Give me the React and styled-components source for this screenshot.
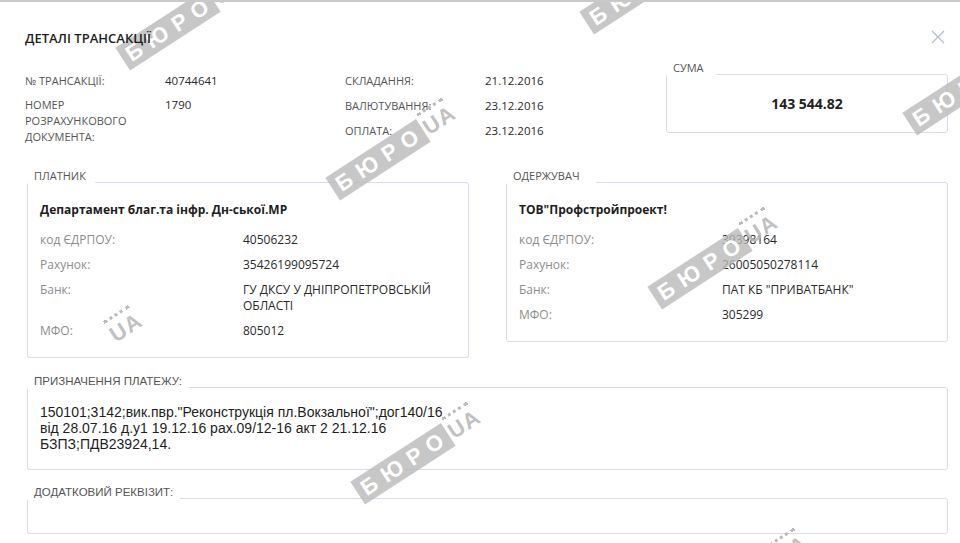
import React from 'react'
import styled, { createGlobalStyle } from 'styled-components'

const GlobalStyle = createGlobalStyle`
  html, body {
    margin: 0;
    padding: 0;
    background: #fff;
  }
  body {
    font-family: "Open Sans", "Noto Sans", sans-serif;
    overflow: hidden;
  }
`

const Modal = styled.div`
  position: relative;
  height: 543px;
  box-sizing: border-box;
  border-top: 2px solid #c9c9c9;
  padding: 27px 12px 0 25px;
  overflow: hidden;
  background: #fff;
`

const Header = styled.div`
  display: flex;
  align-items: center;
  justify-content: space-between;
`

const Title = styled.h1`
  position: relative;
  z-index: 2;
  margin: 0;
  font-size: 13px;
  line-height: 18px;
  font-weight: 600;
  color: #1e1e1e;
  text-transform: uppercase;
`

const Close = styled.button`
  border: 0;
  background: none;
  padding: 0;
  margin: -2px 3px 0 0;
  width: 14px;
  height: 14px;
  cursor: pointer;
  display: flex;
`

const TopSection = styled.div`
  display: grid;
  grid-template-columns: 320px 321px 282px;
  align-items: start;
  margin-top: 15px;
`

const InfoList = styled.dl`
  margin: 0;
  padding-top: 11px;
  display: grid;
  grid-template-columns: 140px 1fr;
  row-gap: ${p => p.$gap}px;
`

const InfoLabel = styled.dt`
  font-size: 11px;
  line-height: 16px;
  color: #555;
  text-transform: uppercase;
`

const InfoValue = styled.dd`
  margin: 0;
  font-size: 11.5px;
  line-height: 16px;
  color: #2a2a2a;
`

const Field = styled.fieldset`
  margin: 0;
  padding: 0;
  min-width: 0;
  border: 1px solid #d6ddef;
  border-radius: 3px;
`

const Legend = styled.legend`
  padding: 0 ${p => p.$gap}px 12px 6px;
  font-family: ${p => (p.$plain ? '"Liberation Sans", Arial, sans-serif' : '"Open Sans", sans-serif')};
  font-size: ${p => (p.$plain ? '11.5px' : '11px')};
  line-height: 12px;
  color: #555;
  text-transform: uppercase;
  background: #fff;
`

const SumValue = styled.div`
  padding: 9px 0 19px;
  text-align: center;
  font-size: 14px;
  line-height: 18px;
  font-weight: 700;
  color: #222;
`

const Parties = styled.div`
  display: grid;
  grid-template-columns: 442px 442px;
  column-gap: 37px;
  align-items: start;
  margin: 25px 0 0 2px;
`

const PartyBody = styled.div`
  padding: 8px 12px 18px 12px;
`

const PartyName = styled.div`
  font-size: 12px;
  line-height: 16px;
  font-weight: 700;
  color: #1e1e1e;
  margin-bottom: 14px;
`

const PartyRows = styled.dl`
  margin: 0;
  display: grid;
  grid-template-columns: 203px 1fr;
  row-gap: 9px;
`

const PartyLabel = styled.dt`
  font-size: 12px;
  line-height: 16px;
  color: #8d8d8d;
`

const PartyValue = styled.dd`
  margin: 0;
  font-size: 12px;
  line-height: 16px;
  color: #2a2a2a;
`

const WideField = styled(Field)`
  margin: ${p => p.$top}px 0 0 2px;
`

const Purpose = styled.div`
  padding: 5px 12px 17px;
  font-family: "Liberation Sans", Arial, sans-serif;
  font-size: 14px;
  line-height: 16px;
  color: #1e1e1e;
  white-space: pre-line;
`

const Empty = styled.div`
  min-height: 23px;
`

const Watermark = styled.div`
  position: absolute;
  z-index: 1;
  transform: translate(-50%, -50%) rotate(-33deg);
  display: flex;
  align-items: center;
  pointer-events: none;
  font-family: "Liberation Sans", Arial, sans-serif;
  font-weight: 700;
  font-size: 22px;
  line-height: 27px;
`

const Band = styled.span`
  background: rgba(185, 185, 185, 0.8);
  color: #fff;
  padding: 0 0 0 6px;
  letter-spacing: 8px;
`

const Tail = styled.span`
  position: relative;
  color: rgba(185, 185, 185, 0.9);
  letter-spacing: 1px;
  padding-left: 2px;
  &::before {
    content: '';
    position: absolute;
    left: 3px;
    right: 3px;
    top: -4px;
    border-top: 3px dotted rgba(175, 175, 175, 0.85);
  }
`

const marks = [
  { x: 183, y: 18 },
  { x: 647, y: -18 },
  { x: 970, y: 83 },
  { x: 393, y: 148 },
  { x: 125, y: 326, tailOnly: true },
  { x: 715, y: 257 },
  { x: 418, y: 452 },
  { x: 745, y: 578 },
]

const payer = {
  name: 'Департамент благ.та інфр. Дн-ської.МР',
  rows: [
    ['код ЄДРПОУ:', '40506232'],
    ['Рахунок:', '35426199095724'],
    ['Банк:', 'ГУ ДКСУ У ДНІПРОПЕТРОВСЬКІЙ ОБЛАСТІ'],
    ['МФО:', '805012'],
  ],
}

const payee = {
  name: 'ТОВ"Профстройпроект!',
  rows: [
    ['код ЄДРПОУ:', '39398164'],
    ['Рахунок:', '26005050278114'],
    ['Банк:', 'ПАТ КБ "ПРИВАТБАНК"'],
    ['МФО:', '305299'],
  ],
}

const Party = ({ title, gap, data }) => (
  <Field>
    <Legend $gap={gap}>{title}</Legend>
    <PartyBody>
      <PartyName>{data.name}</PartyName>
      <PartyRows>
        {data.rows.map(([l, v]) => (
          <React.Fragment key={l}>
            <PartyLabel>{l}</PartyLabel>
            <PartyValue>{v}</PartyValue>
          </React.Fragment>
        ))}
      </PartyRows>
    </PartyBody>
  </Field>
)

const App = () => {
  return (
    <Modal>
      <GlobalStyle />
      <Header>
        <Title>Деталі трансакції</Title>
        <Close aria-label="close">
          <svg width="14" height="14" viewBox="0 0 14 14">
            <path d="M1 1L13 13M13 1L1 13" stroke="#b4bccd" strokeWidth="1.3" fill="none" />
          </svg>
        </Close>
      </Header>

      <TopSection>
        <InfoList $gap={8}>
          <InfoLabel>№ трансакції:</InfoLabel>
          <InfoValue>40744641</InfoValue>
          <InfoLabel>Номер розрахункового документа:</InfoLabel>
          <InfoValue>1790</InfoValue>
        </InfoList>
        <InfoList $gap={9}>
          <InfoLabel>Складання:</InfoLabel>
          <InfoValue>21.12.2016</InfoValue>
          <InfoLabel>Валютування:</InfoLabel>
          <InfoValue>23.12.2016</InfoValue>
          <InfoLabel>Оплата:</InfoLabel>
          <InfoValue>23.12.2016</InfoValue>
        </InfoList>
        <Field>
          <Legend $gap={13}>Сума</Legend>
          <SumValue>143 544.82</SumValue>
        </Field>
      </TopSection>

      <Parties>
        <Party title="Платник" gap={9} data={payer} />
        <Party title="Одержувач" gap={16} data={payee} />
      </Parties>

      <WideField $top={17}>
        <Legend $gap={7} $plain>Призначення платежу:</Legend>
        <Purpose>
          {'150101;3142;вик.пвр."Реконструкція пл.Вокзальної";дог140/16\nвід 28.07.16 д.у1 19.12.16 рах.09/12-16 акт 2 21.12.16\nБЗПЗ;ПДВ23924,14.'}
        </Purpose>
      </WideField>

      <WideField $top={16}>
        <Legend $gap={7} $plain>Додатковий реквізит:</Legend>
        <Empty />
      </WideField>

      {marks.map((m, i) => (
        <Watermark key={i} style={{ left: m.x, top: m.y }}>
          {!m.tailOnly && <Band>БЮРО</Band>}
          <Tail>UA</Tail>
        </Watermark>
      ))}
    </Modal>
  )
}

export default App
